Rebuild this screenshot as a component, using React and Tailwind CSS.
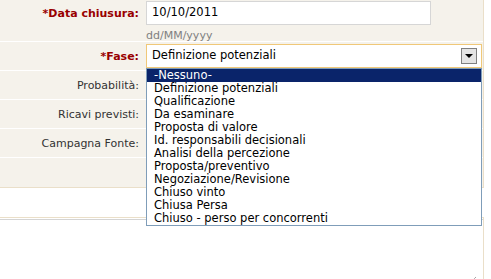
import React from "react";

const options = [
  "-Nessuno-",
  "Definizione potenziali",
  "Qualificazione",
  "Da esaminare",
  "Proposta di valore",
  "Id. responsabili decisionali",
  "Analisi della percezione",
  "Proposta/preventivo",
  "Negoziazione/Revisione",
  "Chiuso vinto",
  "Chiusa Persa",
  "Chiuso - perso per concorrenti",
];

function Label({ children, req }) {
  return (
    <div className="w-[146px] shrink-0 pr-[7px] text-right text-[11px] leading-[13px] text-[#333]">
      {req ? (
        <span className="font-bold text-[#990000]">*{children}</span>
      ) : (
        children
      )}
    </div>
  );
}

export default function App() {
  return (
    <div
      className="relative w-[491px] h-[279px] bg-white overflow-hidden"
      style={{ fontFamily: '"DejaVu Sans", Verdana, sans-serif' }}
    >
      <div className="w-[484px] bg-[#f5f2eb] border-r border-b border-[#eadfc9]">
        <div className="h-[42px] flex border-b border-white">
          <div className="pt-[7px]">
            <Label req>Data chiusura:</Label>
          </div>
          <div className="pt-[1px]">
            <div className="w-[285px] h-[24px] bg-white border border-[#d6d6d6] flex items-center pl-[5px] text-[11.5px] text-black">
              10/10/2011
            </div>
            <div className="text-[11px] text-[#808080] mt-[4px] leading-[13px]">dd/MM/yyyy</div>
          </div>
        </div>
        <div className="h-[29px] flex items-center border-b border-white">
          <Label req>Fase:</Label>
          <div className="w-[336px] h-[24px] bg-white border border-[#f0c878] flex items-center pl-[5px] text-[11.5px] text-black relative">
            Definizione potenziali
            <div className="absolute right-[4px] top-[3px] w-[16px] h-[16px] border border-[#808080] bg-[#e4e4e4] flex items-center justify-center">
              <div className="w-0 h-0 border-l-[4px] border-r-[4px] border-t-[4px] border-l-transparent border-r-transparent border-t-black" />
            </div>
          </div>
        </div>
        <div className="h-[29px] flex items-center border-b border-white">
          <Label>Probabilità:</Label>
        </div>
        <div className="h-[29px] flex items-center border-b border-white">
          <Label>Ricavi previsti:</Label>
        </div>
        <div className="h-[29px] flex items-center border-b border-white">
          <Label>Campagna Fonte:</Label>
        </div>
        <div className="h-[29px]" />
      </div>
      <div className="h-[29px]" />
      <div className="w-[484px] h-[70px] border-t border-r border-[#eadfc9] pt-[1px]">
        <div className="relative h-full border-t border-[#d4d4d4]">
          <svg className="absolute right-[6px] bottom-[3px]" width="8" height="8" viewBox="0 0 8 8">
            <path d="M7 1 L1 7 M7 4 L4 7" stroke="#808080" strokeWidth="1" strokeDasharray="1 1" />
          </svg>
        </div>
      </div>

      <div className="absolute left-[146px] top-[68px] w-[336px] h-[158px] bg-white border border-[#7f9db9] text-[11.5px] leading-[13px] text-black">
        {options.map((o, i) => (
          <div
            key={o}
            className={
              i === 0
                ? "h-[13px] pl-[7px] bg-[#0a246a] text-white"
                : "h-[13px] pl-[7px]"
            }
          >
            {o}
          </div>
        ))}
      </div>
    </div>
  );
}
